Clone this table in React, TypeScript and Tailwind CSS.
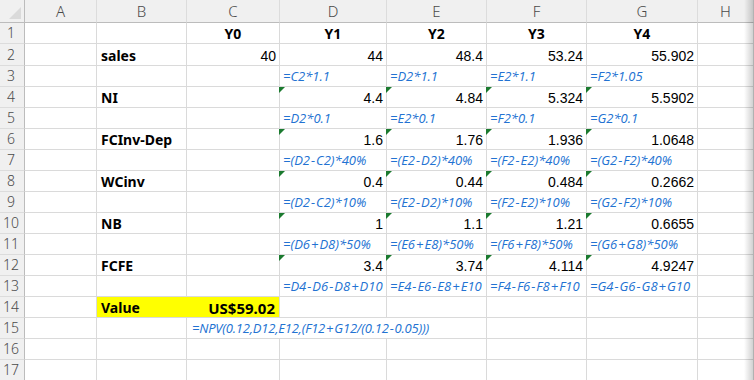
import React from "react";

const GRID = "grid grid-cols-[25px_72px_90px_93px_107px_100px_100px_111px_1fr]";
const LINE = "border-r border-b border-[#dadada]";

const num = "font-['Liberation_Sans',Arial,sans-serif] text-[14px] text-black";
const lab = "font-['Noto_Sans',sans-serif] font-bold text-[14px] text-black";
const fx = "font-['Open_Sans',sans-serif] italic text-[13px] text-[#2272d2]";

type Row = {
  n: number;
  h: string;
  label?: string;
  c?: string;
  vals?: string[];
  kind?: "head" | "num" | "fx";
  tri?: boolean;
};

const rows: Row[] = [
  { n: 1, h: "h-[21px]", c: "Y0", vals: ["Y1", "Y2", "Y3", "Y4"], kind: "head" },
  { n: 2, h: "h-[22px]", label: "sales", c: "40", vals: ["44", "48.4", "53.24", "55.902"], kind: "num" },
  { n: 3, h: "h-[21px]", vals: ["=C2*1.1", "=D2*1.1", "=E2*1.1", "=F2*1.05"], kind: "fx" },
  { n: 4, h: "h-[21px]", label: "NI", vals: ["4.4", "4.84", "5.324", "5.5902"], kind: "num", tri: true },
  { n: 5, h: "h-[21px]", vals: ["=D2*0.1", "=E2*0.1", "=F2*0.1", "=G2*0.1"], kind: "fx" },
  { n: 6, h: "h-[21px]", label: "FCInv-Dep", vals: ["1.6", "1.76", "1.936", "1.0648"], kind: "num", tri: true },
  { n: 7, h: "h-[21px]", vals: ["=(D2-C2)*40%", "=(E2-D2)*40%", "=(F2-E2)*40%", "=(G2-F2)*40%"], kind: "fx" },
  { n: 8, h: "h-[21px]", label: "WCinv", vals: ["0.4", "0.44", "0.484", "0.2662"], kind: "num", tri: true },
  { n: 9, h: "h-[21px]", vals: ["=(D2-C2)*10%", "=(E2-D2)*10%", "=(F2-E2)*10%", "=(G2-F2)*10%"], kind: "fx" },
  { n: 10, h: "h-[21px]", label: "NB", vals: ["1", "1.1", "1.21", "0.6655"], kind: "num", tri: true },
  { n: 11, h: "h-[21px]", vals: ["=(D6+D8)*50%", "=(E6+E8)*50%", "=(F6+F8)*50%", "=(G6+G8)*50%"], kind: "fx" },
  { n: 12, h: "h-[21px]", label: "FCFE", vals: ["3.4", "3.74", "4.114", "4.9247"], kind: "num", tri: true },
  { n: 13, h: "h-[21px]", vals: ["=D4-D6-D8+D10", "=E4-E6-E8+E10", "=F4-F6-F8+F10", "=G4-G6-G8+G10"], kind: "fx" },
];

// minus and plus signs sit a bit apart in the sheet's formula font
function Formula({ text, className = "" }: { text: string; className?: string }) {
  const parts = text.split(/([-+])/);
  return (
    <span className={`${fx} leading-[15px] ${className}`}>
      {parts.map((p, i) =>
        p === "-" || p === "+" ? (
          <span key={i} className="px-[1px]">
            {p}
          </span>
        ) : (
          p
        )
      )}
    </span>
  );
}

function RowNum({ n }: { n: number }) {
  return (
    <div className="flex items-center justify-center pr-[2px] bg-[#f0f0f0] border-r border-r-[#bcbcbc] border-b border-b-[#dcdcdc] font-['Noto_Sans',sans-serif] font-light text-[14px] text-[#4a4a4a] leading-none">
      {n}
    </div>
  );
}

function Tri() {
  return (
    <span className="absolute top-0 left-[-1px] w-0 h-0 border-t-[6px] border-r-[6px] border-t-[#1b7a2f] border-r-transparent" />
  );
}

function Cell({ text, kind, tri }: { text?: string; kind?: Row["kind"]; tri?: boolean }) {
  if (!text) return <div className={LINE} />;
  if (kind === "head")
    return (
      <div className={`${LINE} flex items-end justify-center pb-[1px]`}>
        <span className={`${lab} leading-[16px]`}>{text}</span>
      </div>
    );
  if (kind === "fx")
    return (
      <div className={`${LINE} flex items-end pl-[3px] pb-[2px] whitespace-nowrap`}>
        <Formula text={text} />
      </div>
    );
  return (
    <div className={`${LINE} relative flex items-end justify-end pr-[3px] pb-[1px]`}>
      {tri && <Tri />}
      <span className={`${num} leading-[16px]`}>{text}</span>
    </div>
  );
}

export default function App() {
  const letters = ["A", "B", "C", "D", "E", "F", "G", "H"];
  return (
    <div className="relative w-[754px] h-[380px] overflow-hidden bg-white">
      {/* column header */}
      <div className={`${GRID} h-[23px]`}>
        <div className="relative bg-[#f0f0f0] border-r border-b border-[#bcbcbc]">
          <span className="absolute right-[3px] bottom-[3px] w-0 h-0 border-b-[12px] border-l-[12px] border-b-[#dadada] border-l-transparent" />
        </div>
        {letters.map((l) => (
          <div
            key={l}
            className="flex items-center justify-center bg-[#f0f0f0] border-r border-r-[#dcdcdc] border-b border-b-[#bcbcbc] font-['Noto_Sans',sans-serif] font-light text-[15px] text-[#4a4a4a] leading-none"
          >
            {l}
          </div>
        ))}
      </div>

      {rows.map((r) => (
        <div key={r.n} className={`${GRID} ${r.h}`}>
          <RowNum n={r.n} />
          <div className={LINE} />
          {r.label ? (
            <div className={`${LINE} flex items-end pl-[4px] pb-[1px]`}>
              <span className={`${lab} leading-[16px]`}>{r.label}</span>
            </div>
          ) : (
            <div className={LINE} />
          )}
          <Cell text={r.c} kind={r.kind} />
          {(r.vals ?? []).map((v, i) => (
            <Cell key={i} text={v} kind={r.kind} tri={r.tri} />
          ))}
          <div className={LINE} />
        </div>
      ))}

      {/* row 14 */}
      <div className={`${GRID} h-[21px]`}>
        <RowNum n={14} />
        <div className={LINE} />
        <div className="flex items-end pl-[4px] pb-[1px] bg-[#ffff00] border-b border-[#dadada]">
          <span className={`${lab} leading-[16px]`}>Value</span>
        </div>
        <div className={`${LINE} flex items-end justify-end pr-[4px] pb-[1px] bg-[#ffff00]`}>
          <span className={`${lab} text-[15px] leading-[16px]`}>US$59.02</span>
        </div>
        <div className={LINE} />
        <div className={LINE} />
        <div className={LINE} />
        <div className={LINE} />
        <div className={LINE} />
      </div>

      {/* row 15 */}
      <div className={`${GRID} h-[21px]`}>
        <RowNum n={15} />
        <div className={LINE} />
        <div className={LINE} />
        <div className="relative border-b border-[#dadada] flex items-end pl-[5px] pb-[2px] whitespace-nowrap z-10">
          <Formula text="=NPV(0.12,D12,E12,(F12+G12/(0.12-0.05)))" className="tracking-[-0.2px]" />
        </div>
        <div className="border-b border-[#dadada]" />
        <div className={LINE} />
        <div className={LINE} />
        <div className={LINE} />
        <div className={LINE} />
      </div>

      {[16, 17].map((n) => (
        <div key={n} className={`${GRID} h-[21px]`}>
          <RowNum n={n} />
          {letters.map((l) => (
            <div key={l} className={LINE} />
          ))}
        </div>
      ))}

      {/* right edge shadow */}
      <div className="absolute top-0 right-0 bottom-0 w-[10px] bg-gradient-to-r from-transparent to-black/20 pointer-events-none" />
    </div>
  );
}
